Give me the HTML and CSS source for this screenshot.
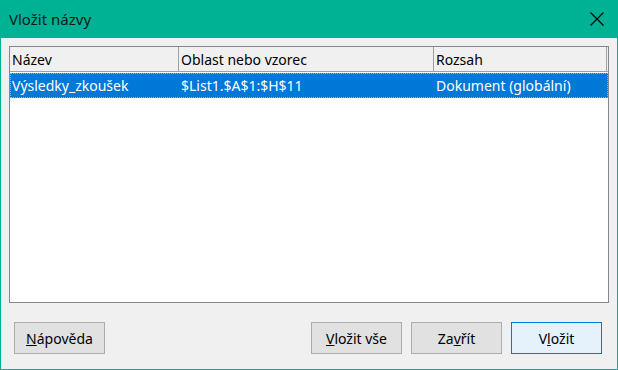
FILE: index.html
```html
<!DOCTYPE html>
<html lang="cs">
<head>
    <meta charset="UTF-8">
    <title>Vložit názvy</title>
    <link rel="stylesheet" href="styles.css">
</head>
<body>
    <div class="window">
        <div class="titlebar">
            <span class="title">Vložit názvy</span>
            <svg class="close" width="14" height="14" viewBox="0 0 14 14">
                <path d="M0.5 0.5 L13.5 13.5 M13.5 0.5 L0.5 13.5" stroke="#000" stroke-width="1.2" fill="none"/>
            </svg>
        </div>
        <div class="content">
            <div class="list">
                <div class="row head">
                    <div class="cell c1">Název</div>
                    <div class="cell c2">Oblast nebo vzorec</div>
                    <div class="cell c3">Rozsah</div>
                </div>
                <div class="row selected">
                    <div class="cell c1">Výsledky_zkoušek</div>
                    <div class="cell c2">$List1.$A$1:$H$11</div>
                    <div class="cell c3">Dokument (globální)</div>
                </div>
            </div>
            <div class="buttons">
                <button class="btn"><u>N</u>ápověda</button>
                <div class="spacer"></div>
                <button class="btn"><u>V</u>ložit vše</button>
                <button class="btn">Za<u>v</u>řít</button>
                <button class="btn default">V<u>l</u>ožit</button>
            </div>
        </div>
    </div>
</body>
</html>
```

FILE: styles.css
```css
body{
    margin: 0;
    font-family: "Noto Sans", "Open Sans", sans-serif;
    font-size: 14px;
    color: #000;
}
.window{
    width: 618px;
    height: 370px;
    box-sizing: border-box;
    border: 1px solid #00b294;
    border-top: none;
    background: #f0f0f0;
    display: flex;
    flex-direction: column;
}
.titlebar{
    height: 38px;
    margin: 0 -1px;
    background: #00b294;
    display: flex;
    align-items: center;
    justify-content: space-between;
    padding: 0 14px 0 9px;
}
.title{
    font-size: 15px;
    color: #0c1a16;
}
.content{
    flex: 1;
    padding: 8px 8px 0 8px;
    display: flex;
    flex-direction: column;
}
.list{
    height: 257px;
    box-sizing: border-box;
    border: 1px solid #828790;
    background: #fff;
}
.row{
    display: flex;
    height: 24px;
    align-items: center;
}
.head{
    background: #f0f0f0;
    border-bottom: 1px solid #a0a0a0;
}
.cell{
    box-sizing: border-box;
    height: 100%;
    display: flex;
    align-items: center;
    padding-left: 2px;
    white-space: nowrap;
}
.c1{ width: 169px; }
.c2{ width: 255px; }
.c3{ flex: 1; }
.head .c1, .head .c2{
    border-right: 1px solid #a0a0a0;
}
.head .c3{
    margin-right: 1px;
    border-right: 1px solid #a0a0a0;
}
.selected{
    margin-top: 1px;
    height: 25px;
    background: #0078d7;
    color: #fff;
    outline: 1px dotted #e8a040;
    outline-offset: -1px;
}
.buttons{
    display: flex;
    gap: 9px;
    margin-top: 19px;
    padding: 0 7px 0 5px;
}
.spacer{ flex: 1; }
.btn{
    width: 91px;
    height: 32px;
    box-sizing: border-box;
    border: 1px solid #adadad;
    background: #e1e1e1;
    font-family: inherit;
    font-size: 14px;
    color: #000;
    padding: 0;
}
.default{
    border-color: #0078d7;
    background: #e5f1fb;
}
```
